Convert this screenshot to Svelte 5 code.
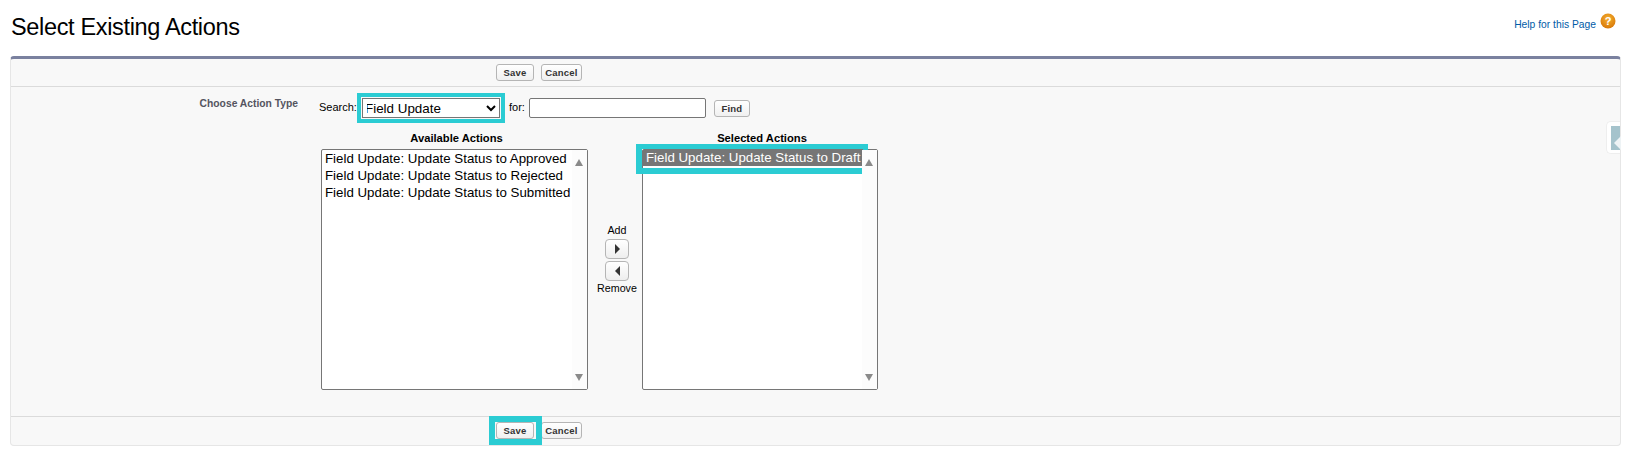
<script>
  const available = [
    'Field Update: Update Status to Approved',
    'Field Update: Update Status to Rejected',
    'Field Update: Update Status to Submitted'
  ];
</script>

<div class="page">
  <header class="head">
    <h1>Select Existing Actions</h1>
    <a class="help" href="#help"><span class="help-text">Help for this Page</span>
      <svg width="16" height="16" viewBox="0 0 16 16" aria-hidden="true">
        <defs>
          <radialGradient id="g" cx="50%" cy="35%" r="65%">
            <stop offset="0" stop-color="#f5b030" />
            <stop offset="1" stop-color="#d87808" />
          </radialGradient>
        </defs>
        <circle cx="8" cy="8" r="7.5" fill="url(#g)" />
        <text x="8" y="12" text-anchor="middle" class="q">?</text>
      </svg>
    </a>
  </header>

  <section class="panel">
    <div class="bar top">
      <button class="btn save">Save</button>
      <button class="btn cancel">Cancel</button>
    </div>

    <div class="body">
      <div class="label">Choose Action Type</div>
      <div class="content">
        <div class="search">
          <span class="txt">Search:</span>
          <span class="hl hl-select">
            <select><option>Field Update</option></select>
          </span>
          <span class="txt for">for:</span>
          <input type="text" />
          <button class="btn find">Find</button>
        </div>

        <div class="picker">
          <div class="col">
            <div class="title">Available Actions</div>
            <div class="list">
              <div class="opts">
                {#each available as a}
                  <div class="opt">{a}</div>
                {/each}
              </div>
              <div class="track"><i class="up"></i><i class="down"></i></div>
            </div>
          </div>

          <div class="move">
            <div class="mv">Add</div>
            <button class="arrow" aria-label="Add">
              <svg width="7" height="10" viewBox="0 0 7 10"><path d="M1 0l5 5-5 5z" fill="#333" /></svg>
            </button>
            <button class="arrow" aria-label="Remove">
              <svg width="7" height="10" viewBox="0 0 7 10"><path d="M6 0L1 5l5 5z" fill="#333" /></svg>
            </button>
            <div class="mv rm">Remove</div>
          </div>

          <div class="col">
            <div class="title">Selected Actions</div>
            <div class="list">
              <div class="opts">
                <div class="hl hl-opt"><div class="opt sel">Field Update: Update Status to Draft</div></div>
              </div>
              <div class="track"><i class="up"></i><i class="down"></i></div>
            </div>
          </div>
        </div>
      </div>

      <div class="tab"><span class="tab-in"><i></i></span></div>
    </div>

    <div class="bar bottom">
      <span class="hl hl-save"><button class="btn save">Save</button></span>
      <button class="btn cancel">Cancel</button>
    </div>
  </section>
</div>

<style>
  :global(body) {
    margin: 0;
    background: #fff;
    font-family: "Liberation Sans", Arial, sans-serif;
    color: #000;
  }
  .page {
    padding: 0 8px 0 10px;
  }
  .head {
    height: 56px;
    display: flex;
    align-items: flex-start;
    justify-content: space-between;
  }
  h1 {
    margin: 12px 0 0 1px;
    font-size: 23.5px;
    line-height: 30px;
    font-weight: 400;
    letter-spacing: -0.34px;
  }
  .help {
    display: flex;
    align-items: flex-start;
    gap: 4px;
    margin: 13px 5px 0 0;
    font-size: 10.3px;
    color: #015ba7;
    text-decoration: none;
  }
  .help-text {
    padding-top: 6px;
  }
  .q {
    font: bold 11px "Liberation Sans", sans-serif;
    fill: #fff;
  }
  .panel {
    background: #f8f8f8;
    border: 1px solid #e6e6e6;
    border-top: 3px solid #7a819f;
    border-radius: 4px;
  }
  .bar {
    display: flex;
    align-items: center;
    gap: 7px;
    padding-left: 485px;
  }
  .bar.top {
    height: 27px;
    border-bottom: 1px solid #dbdbdb;
  }
  .bar.bottom {
    height: 29px;
    border-top: 1px solid #dbdbdb;
    padding-bottom: 1px;
    box-sizing: border-box;
  }
  .btn {
    height: 17px;
    padding: 0;
    border: 1px solid #b5b5b5;
    border-radius: 3px;
    background: linear-gradient(#fff, #f0f0f0);
    font: bold 9.5px "Liberation Sans", sans-serif;
    color: #333;
    letter-spacing: 0.2px;
  }
  .save {
    width: 38px;
    display: block;
  }
  .cancel {
    width: 41px;
  }
  .find {
    width: 36px;
    margin-left: 8px;
    margin-top: 2px;
  }
  .body {
    position: relative;
    height: 329px;
    display: flex;
    box-sizing: border-box;
  }
  .label {
    width: 287px;
    padding: 11px 1px 0 0;
    text-align: right;
    font-size: 10.3px;
    font-weight: 700;
    color: #54545f;
  }
  .content {
    padding: 11px 0 0 20px;
  }
  .search {
    display: flex;
    align-items: flex-start;
    height: 20px;
  }
  .txt {
    font-size: 11px;
    padding-top: 3px;
    width: 43px;
    white-space: nowrap;
  }
  .for {
    width: auto;
    margin-left: 9px;
    margin-right: 4px;
  }
  select {
    display: block;
    box-sizing: border-box;
    width: 138px;
    height: 20px;
    font: 13.4px "Liberation Sans", sans-serif;
    text-indent: -2px;
    background: #fff;
    border: 1px solid #767676;
    border-radius: 0;
    padding: 0;
  }
  input {
    box-sizing: border-box;
    width: 177px;
    height: 20px;
    border: 1px solid #767676;
    border-radius: 2px;
    background: #fff;
    padding: 0;
  }
  .hl {
    position: relative;
    display: block;
  }
  .hl::after {
    content: "";
    position: absolute;
    border-style: solid;
    border-color: #2bccd3;
    pointer-events: none;
  }
  .hl-select::after {
    inset: -5px;
    border-width: 4px;
  }
  .hl-opt::after {
    inset: -6px -6px -8px -7px;
    border-width: 5px 5px 6px 6px;
  }
  .hl-save::after {
    inset: -6px -8px -6px -7px;
    border-width: 6px;
  }
  .picker {
    display: flex;
    margin: 14px 0 0 2px;
  }
  .col {
    display: flex;
    flex-direction: column;
  }
  .title {
    height: 17px;
    font-size: 11.2px;
    font-weight: 700;
    text-align: center;
    line-height: 13px;
    padding-left: 4px;
  }
  .list {
    display: flex;
    height: 239px;
    border: 1px solid #767676;
    border-radius: 2px;
    background: #fff;
  }
  .col:first-child .list {
    width: 265px;
  }
  .col:last-child .list {
    width: 234px;
  }
  .opts {
    flex: 1;
  }
  .opt {
    height: 17px;
    line-height: 17px;
    padding-left: 3px;
    font-size: 13.3px;
    white-space: nowrap;
  }
  .opt.sel {
    height: 16px;
    line-height: 16px;
    padding-left: 3px;
    background: #767676;
    color: #fff;
    font-weight: 400;
  }
  .track {
    position: relative;
    width: 15px;
    background: #fcfcfc;
  }
  .track i {
    position: absolute;
    left: 3px;
    border-left: 4.5px solid transparent;
    border-right: 4.5px solid transparent;
  }
  .up {
    top: 9px;
    border-bottom: 7px solid #8a8a8a;
  }
  .down {
    bottom: 8px;
    border-top: 7px solid #8a8a8a;
  }
  .move {
    width: 50px;
    padding: 91px 0 0 4px;
    display: flex;
    flex-direction: column;
    align-items: center;
    gap: 2px;
  }
  .mv {
    font-size: 10.7px;
    line-height: 14px;
  }
  .rm {
    margin-top: -2px;
  }
  .arrow {
    width: 24px;
    height: 20px;
    padding: 0;
    display: flex;
    align-items: center;
    justify-content: center;
    border: 1px solid #b5b5b5;
    border-radius: 4px;
    background: linear-gradient(#fff, #eee);
  }
  .tab {
    position: absolute;
    right: 0;
    top: 34px;
    width: 14px;
    height: 33px;
    box-sizing: border-box;
    padding: 4px 0 3px 4px;
    background: #fff;
    border-radius: 5px 0 0 5px;
    border: 1px solid #eee;
    border-right: 0;
  }
  .tab-in {
    display: flex;
    align-items: center;
    height: 100%;
    background: #a5c3cc;
    padding-left: 3px;
  }
  .tab-in i {
    margin-top: 9px;
    border-right: 7px solid #eef3f5;
    border-top: 7px solid transparent;
    border-bottom: 7px solid transparent;
  }
</style>
